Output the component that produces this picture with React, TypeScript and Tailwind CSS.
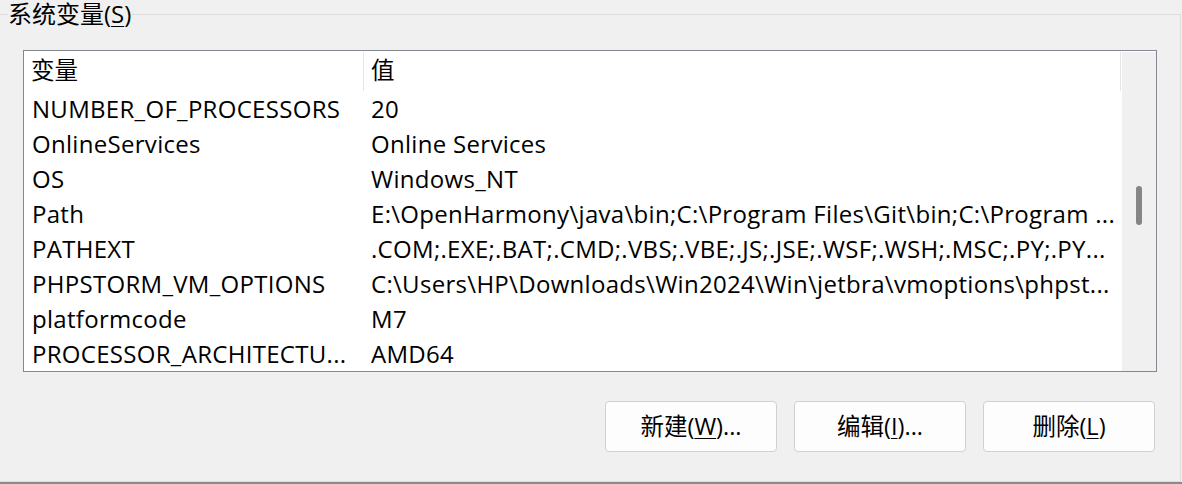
import React from "react";

const rows: [string, string][] = [
  ["NUMBER_OF_PROCESSORS", "20"],
  ["OnlineServices", "Online Services"],
  ["OS", "Windows_NT"],
  ["Path", "E:\\OpenHarmony\\java\\bin;C:\\Program Files\\Git\\bin;C:\\Program ..."],
  ["PATHEXT", ".COM;.EXE;.BAT;.CMD;.VBS;.VBE;.JS;.JSE;.WSF;.WSH;.MSC;.PY;.PY..."],
  ["PHPSTORM_VM_OPTIONS", "C:\\Users\\HP\\Downloads\\Win2024\\Win\\jetbra\\vmoptions\\phpst..."],
  ["platformcode", "M7"],
  ["PROCESSOR_ARCHITECTU...", "AMD64"],
];

function Btn({ pre, k, post }: { pre: string; k: string; post: string }) {
  return (
    <button className="w-[172px] h-[51px] rounded-[4px] border border-[#d0d0d0] bg-[#fdfdfd] text-[23.5px] text-black flex items-center justify-center">
      <span>
        {pre}
        <span className="underline underline-offset-[3px] decoration-1">{k}</span>
        {post}
      </span>
    </button>
  );
}

export default function App() {
  return (
    <div
      className="w-[1182px] h-[484px] bg-[#f0f0f0] overflow-hidden flex flex-col text-black"
      style={{ fontFamily: '"Open Sans", "Noto Sans CJK SC", sans-serif' }}
    >
      <fieldset className="-ml-[1px] -mt-[3px] w-[1182px] h-[485px] shrink-0 border border-[#dcdcdc] p-0 m-0 min-w-0">
        <legend className="ml-[8px] p-0 text-[24px] leading-[34px]">
          系统变量(<span className="underline underline-offset-[3px] decoration-1">S</span>)
        </legend>
        <div className="ml-[23px] mt-[19px] w-[1134px] h-[322px] border border-[#828790] bg-white flex overflow-hidden">
          <div className="w-[1098px] flex flex-col overflow-hidden">
            <div className="h-[40px] flex shrink-0 text-[23.5px]">
              <div className="w-[339px] pl-[7px] flex items-center">变量</div>
              <div className="w-px mt-px h-[39px] bg-[#e5e5e5]" />
              <div className="w-[756px] pl-[7px] flex items-center">值</div>
              <div className="w-px mt-px h-[39px] bg-[#e5e5e5]" />
            </div>
            {rows.map(([n, v]) => (
              <div key={n} className="h-[35px] flex shrink-0 text-[24px] leading-[35px] tracking-[0.3px]">
                <div className="w-[340px] pl-[8px] whitespace-nowrap overflow-hidden">{n}</div>
                <div className="w-[754px] pl-[7px] whitespace-nowrap overflow-hidden">{v}</div>
              </div>
            ))}
          </div>
          <div className="w-[34px] mt-px bg-[#f0f0f0] pt-[134px] pl-[14px]">
            <div className="w-[6px] h-[39px] rounded-full bg-[#858585]" />
          </div>
        </div>
        <div className="mt-[29px] flex justify-end gap-[17px] pr-[25px]">
          <Btn pre="新建(" k="W" post=")..." />
          <Btn pre="编辑(" k="I" post=")..." />
          <Btn pre="删除(" k="L" post=")" />
        </div>
      </fieldset>
      <div className="h-[2px] shrink-0 bg-[#8a8a8a]" />
    </div>
  );
}
